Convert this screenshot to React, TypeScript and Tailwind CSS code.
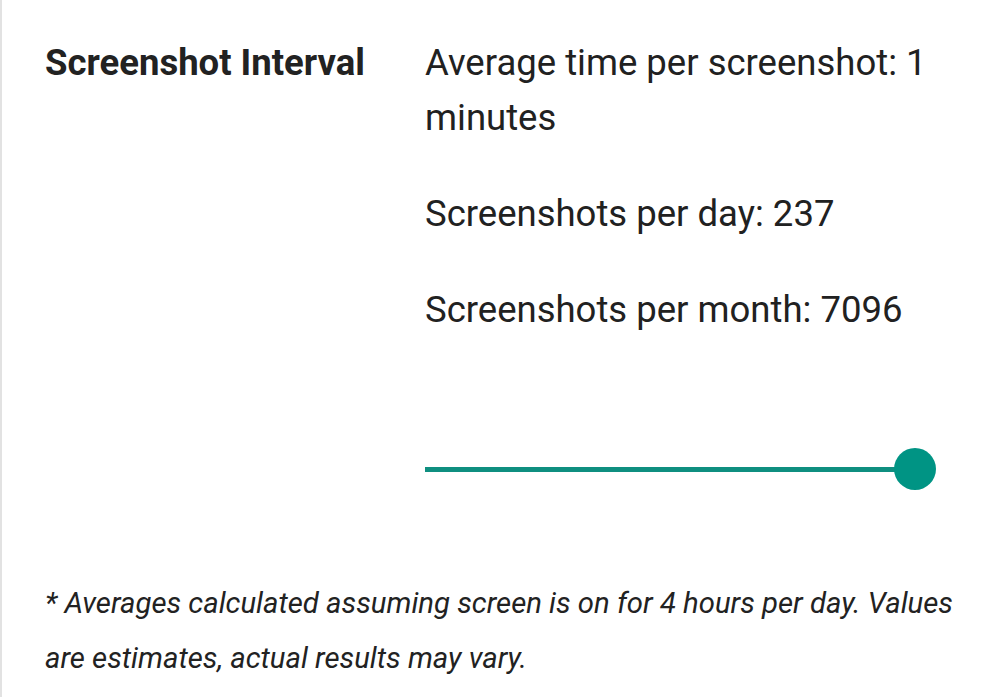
import React from "react";

export default function App() {
  return (
    <div
      className="w-[993px] h-[697px] bg-white border-l-2 border-[#e2e2e2] text-[#212121] overflow-hidden"
      style={{ fontFamily: "Roboto, 'Noto Sans', sans-serif" }}
    >
      <div className="flex pt-[35px]">
        <div className="w-[423px] pl-[43px] shrink-0">
          <div className="text-[36.5px] leading-[55px] font-bold text-[#222] whitespace-nowrap">Screenshot Interval</div>
        </div>
        <div className="w-[511px] shrink-0">
          <p className="text-[36.5px] leading-[55px] mb-[41px]">Average time per screenshot: 1 minutes</p>
          <p className="text-[36.5px] leading-[55px] mb-[41px]">Screenshots per day: 237</p>
          <p className="text-[36.5px] leading-[55px]">Screenshots per month: 7096</p>
          <div className="relative h-[44px] mt-[111px] w-[511px]">
            <div className="absolute left-0 right-[20px] top-[19px] h-[5px] bg-[#0f8f80]" />
            <div className="absolute right-0 top-0 w-[42px] h-[42px] rounded-full bg-[#009484]" />
          </div>
        </div>
      </div>
      <div className="pl-[43px] pr-[20px] mt-[84px]">
        <p className="italic text-[29.3px] leading-[55px] text-[#222]">
          * Averages calculated assuming screen is on for 4 hours per day. Values are estimates, actual results may vary.
        </p>
      </div>
    </div>
  );
}
